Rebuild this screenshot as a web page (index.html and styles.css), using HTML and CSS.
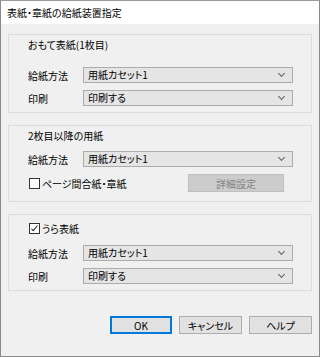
FILE: index.html
```html
<!DOCTYPE html>
<html lang="ja">
<head>
  <meta charset="UTF-8">
  <title>表紙・章紙の給紙装置指定</title>
  <link rel="stylesheet" href="styles.css">
</head>
<body>
  <div class="window">
    <div class="titlebar">表紙・章紙の給紙装置指定</div>

    <div class="content">
      <div class="group g1">
        <div class="group-title">おもて表紙(1枚目)</div>
        <div class="row first">
          <span class="label">給紙方法</span>
          <div class="combo">用紙カセット1<span class="chev"></span></div>
        </div>
        <div class="row">
          <span class="label">印刷</span>
          <div class="combo">印刷する<span class="chev"></span></div>
        </div>
      </div>

      <div class="group g2">
        <div class="group-title">2枚目以降の用紙</div>
        <div class="row first">
          <span class="label">給紙方法</span>
          <div class="combo">用紙カセット1<span class="chev"></span></div>
        </div>
        <div class="row check-row">
          <label class="check"><span class="box"></span>ページ間合紙・章紙</label>
          <button class="btn disabled">詳細設定</button>
        </div>
      </div>

      <div class="group g3">
        <label class="check"><span class="box checked"></span>うら表紙</label>
        <div class="row first">
          <span class="label">給紙方法</span>
          <div class="combo">用紙カセット1<span class="chev"></span></div>
        </div>
        <div class="row">
          <span class="label">印刷</span>
          <div class="combo">印刷する<span class="chev"></span></div>
        </div>
      </div>

      <div class="buttons">
        <button class="btn default">OK</button>
        <button class="btn">キャンセル</button>
        <button class="btn">ヘルプ</button>
      </div>
    </div>
  </div>
</body>
</html>
```

FILE: styles.css
```css
body { margin: 0; padding: 0; background: #fff; font-family: "Noto Sans CJK JP", "Noto Sans", sans-serif; font-size: 10px; color: #000; font-feature-settings: "palt"; }
.window { width: 320px; height: 357px; box-sizing: border-box; border: 1px solid #8a8a8a; border-top-color: #9a9a9a; background: #f0f0f0; display: flex; flex-direction: column; }
.titlebar { height: 23px; background: #fff; padding-left: 6px; line-height: 23px; font-size: 10px; }
.content { flex: 1; padding: 10px 7px 0 7px; display: flex; flex-direction: column; }
.group { border: 1px solid #dcdcdc; padding: 0 18px 0 19px; display: flex; flex-direction: column; }
.group-title { height: 16px; line-height: 16px; }
.g1 { padding-top: 2px; padding-bottom: 6px; }
.g1 .row.first { margin-top: 14px; }
.g2 { margin-top: 12px; padding-top: 2px; padding-bottom: 9px; }
.g2 .row.first { margin-top: 7px; }
.g3 { margin-top: 12px; padding-top: 5px; padding-bottom: 6px; }
.g3 .row.first { margin-top: 9px; }
.row { display: flex; align-items: center; margin-top: 7px; }
.label { width: 55px; }
.combo { position: relative; flex: 1; height: 14px; line-height: 14px; border: 1px solid #acacac; background: #e5e5e5; padding-left: 4px; }
.chev { position: absolute; right: 8px; top: 3px; width: 4px; height: 4px; border-right: 1px solid #606060; border-bottom: 1px solid #606060; transform: rotate(45deg); }
.check-row { justify-content: space-between; margin-top: 7px; }
.check { display: flex; align-items: center; height: 16px; }
.box { width: 9px; height: 9px; border: 1px solid #333; background: #fff; margin: 0 2px 0 1px; position: relative; }
.box.checked::after { content: ""; position: absolute; left: 3px; top: 0; width: 2px; height: 6px; border-right: 1px solid #222; border-bottom: 1px solid #222; transform: rotate(40deg); }
.btn { font: inherit; font-feature-settings: "palt"; height: 18px; padding: 0; border: 1px solid #adadad; background: #e1e1e1; color: #000; }
.btn.disabled { width: 96px; margin-right: 9px; background: #cccccc; border-color: #bfbfbf; color: #838383; }
.buttons { display: flex; justify-content: flex-end; gap: 7px; margin-top: 25px; }
.buttons .btn { width: 63px; }
.btn.default { border: 2px solid #0078d7; width: 62px; }
```
